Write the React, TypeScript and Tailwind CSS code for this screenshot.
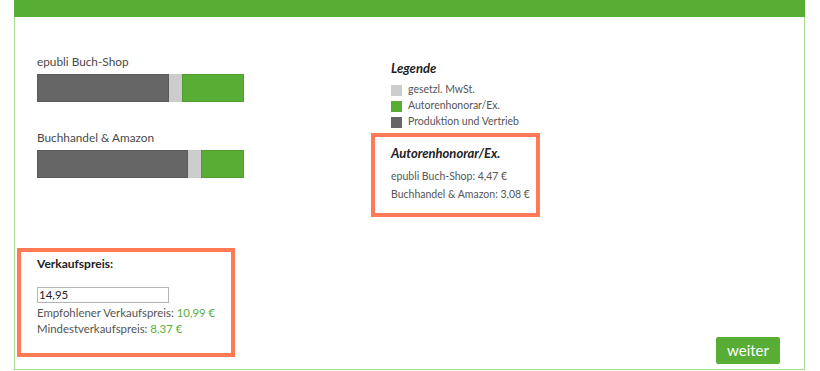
const font = { fontFamily: "Lato, 'Open Sans', sans-serif" };

function Bar({ dark, gray, green }: { dark: number; gray: number; green: number }) {
  return (
    <div className="flex h-[28px] w-[207px]">
      <div className="h-full bg-[#666666] border border-[#5a5a5a]" style={{ width: dark }} />
      <div className="h-full bg-[#cccccc]" style={{ width: gray }} />
      <div className="h-full bg-[#58ad35] border border-[#4e9f2e]" style={{ width: green }} />
    </div>
  );
}

function LegendItem({ color, label }: { color: string; label: string }) {
  return (
    <div className="flex items-center h-[16px] gap-[6px]">
      <span className={`w-[11px] h-[11px] ${color}`} />
      <span className="text-[10.5px] text-[#555] whitespace-nowrap">{label}</span>
    </div>
  );
}

export default function App() {
  return (
    <div className="w-[820px] h-[371px] bg-white overflow-hidden" style={font}>
      <div className="ml-[14px] w-[791px] h-[370px] border-x border-b border-[#a8dc94] flex flex-col">
        <div className="h-[17px] -mx-px bg-[#58ad35] shrink-0" />

        <div className="flex h-[231px] shrink-0">
          <div className="w-[356px] pl-[22px] pt-[37px]">
            <div className="text-[11.8px] leading-[16px] text-[#4a4a4a] whitespace-nowrap">epubli Buch-Shop</div>
            <div className="mt-[4px]">
              <Bar dark={132} gray={13} green={62} />
            </div>
            <div className="mt-[28px] text-[11.8px] leading-[16px] text-[#4a4a4a] whitespace-nowrap">Buchhandel &amp; Amazon</div>
            <div className="mt-[4px]">
              <Bar dark={151} gray={13} green={43} />
            </div>
          </div>

          <div className="pt-[42px]">
            <div className="pl-[20px]">
              <div className="text-[13px] leading-[18px] font-bold italic text-[#222]">Legende</div>
              <div className="mt-[5px] flex flex-col">
                <LegendItem color="bg-[#cccccc]" label="gesetzl. MwSt." />
                <LegendItem color="bg-[#58ad35]" label="Autorenhonorar/Ex." />
                <LegendItem color="bg-[#666666]" label="Produktion und Vertrieb" />
              </div>
            </div>
            <div className="mt-[3px] w-[169px] h-[84px] border-4 border-[#ff7a55] pl-[16px] pt-[7px]">
              <div className="text-[13px] leading-[18px] font-bold italic text-[#222] whitespace-nowrap">Autorenhonorar/Ex.</div>
              <div className="mt-[5px] text-[10.5px] leading-[18px] text-[#555] whitespace-nowrap">epubli Buch-Shop: 4,47 €</div>
              <div className="text-[10.5px] leading-[18px] text-[#555] whitespace-nowrap">Buchhandel &amp; Amazon: 3,08 €</div>
            </div>
          </div>
        </div>

        <div className="flex-1 flex justify-between">
          <div className="ml-[2px] w-[218px] h-[109px] border-4 border-[#ff7a55] pl-[16px] pt-[4px]">
            <div className="text-[12px] leading-[16px] font-bold text-[#222]">Verkaufspreis:</div>
            <input
              defaultValue="14,95"
              className="mt-[15px] block w-[132px] h-[16px] border border-[#b5b5b5] px-[1px] text-[11.5px] text-[#222] outline-none"
              style={font}
            />
            <div className="mt-[2px] text-[11.4px] leading-[16px] text-[#555] whitespace-nowrap">
              Empfohlener Verkaufspreis: <span className="text-[#5aad38]">10,99 €</span>
            </div>
            <div className="text-[11.4px] leading-[16px] text-[#555] whitespace-nowrap">
              Mindestverkaufspreis: <span className="text-[#5aad38]">8,37 €</span>
            </div>
          </div>
          <button className="self-end mb-[5px] mr-[24px] w-[64px] h-[27px] bg-[#58ad35] rounded-[2px] text-white text-[15px] leading-none">
            weiter
          </button>
        </div>
      </div>
    </div>
  );
}
